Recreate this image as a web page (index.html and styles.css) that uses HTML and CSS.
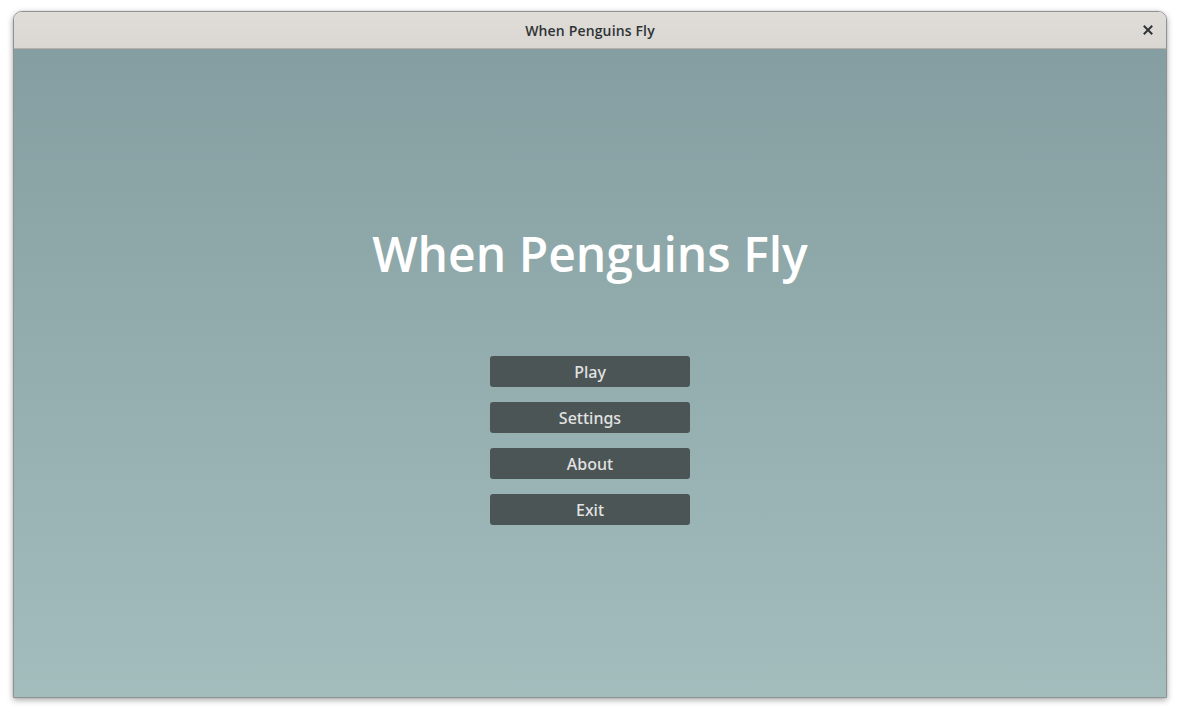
FILE: index.html
```html
<!DOCTYPE html>
<html>
<head>
<meta charset="utf-8">
<title>When Penguins Fly</title>
<link rel="stylesheet" href="styles.css">
</head>
<body>
<div class="window">
  <header class="titlebar">
    <span class="titlebar-title">When Penguins Fly</span>
    <button class="close-btn" aria-label="Close">
      <svg width="10" height="10" viewBox="0 0 10 10"><path d="M1.5 1.5 L8.5 8.5 M8.5 1.5 L1.5 8.5" stroke="#2e3436" stroke-width="2" stroke-linecap="square" fill="none"/></svg>
    </button>
  </header>
  <main class="content">
    <h1 class="game-title">When Penguins Fly</h1>
    <nav class="menu">
      <button class="menu-btn">Play</button>
      <button class="menu-btn">Settings</button>
      <button class="menu-btn">About</button>
      <button class="menu-btn">Exit</button>
    </nav>
  </main>
</div>
</body>
</html>
```
FILE: styles.css
```css
html, body {
  margin: 0;
  padding: 0;
  background: #ffffff;
  width: 1180px;
  height: 714px;
  overflow: hidden;
}
body {
  padding: 11px 0 0 13px;
  box-sizing: border-box;
}
.window {
  width: 1154px;
  height: 687px;
  box-sizing: border-box;
  border: 1px solid #8f9294;
  border-radius: 9px 9px 0 0;
  overflow: hidden;
  display: flex;
  flex-direction: column;
  box-shadow: 0 2px 6px rgba(0,0,0,0.35), 0 0 1px rgba(0,0,0,0.3);
}
.titlebar {
  height: 36px;
  flex: 0 0 36px;
  background: linear-gradient(#e0dcd8, #dad6d2);
  border-bottom: 1px solid #b9b1a9;
  display: flex;
  align-items: center;
  justify-content: center;
  position: relative;
}
.titlebar-title {
  font-family: "Open Sans", "Noto Sans", sans-serif;
  font-weight: 600;
  font-size: 14px;
  letter-spacing: 0.15px;
  color: #2e3436;
  padding-top: 1px;
}
.close-btn {
  position: absolute;
  right: 13px;
  top: 13px;
  width: 10px;
  height: 10px;
  padding: 0;
  margin: 0;
  border: 0;
  background: none;
  display: flex;
}
.content {
  flex: 1;
  background: linear-gradient(#859ea1, #a3bcbc);
  display: flex;
  flex-direction: column;
  align-items: center;
  padding-top: 181px;
}
.game-title {
  margin: 0;
  font-family: "Open Sans", sans-serif;
  font-weight: 600;
  font-size: 48px;
  line-height: 48px;
  color: #ffffff;
}
.menu {
  margin-top: 78px;
  display: flex;
  flex-direction: column;
  gap: 15px;
}
.menu-btn {
  width: 200px;
  height: 31px;
  background: #4b5556;
  border: 0;
  border-radius: 3px;
  color: #e2e2e2;
  font-family: "Noto Sans", "Open Sans", sans-serif;
  font-weight: 500;
  font-size: 16px;
  padding: 0;
}
```
